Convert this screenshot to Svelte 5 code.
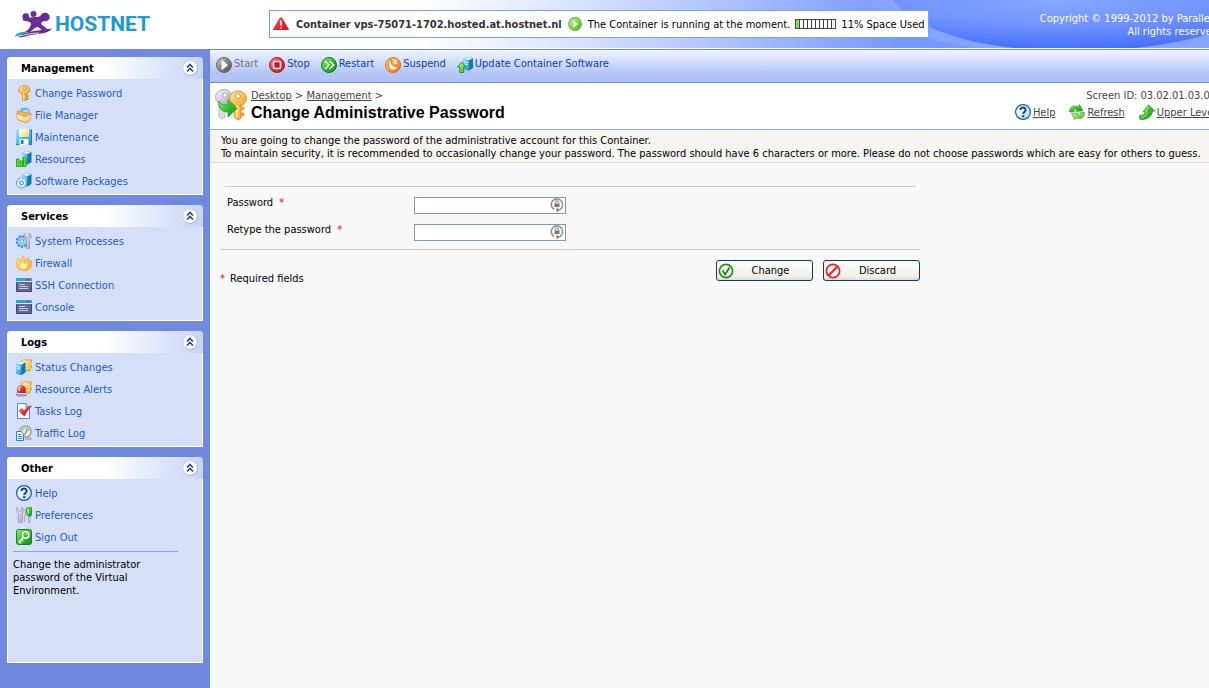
<script>
    const menu = [
        {
            title: "Management",
            items: [
                { icon: "key", text: "Change Password" },
                { icon: "files", text: "File Manager" },
                { icon: "floppy", text: "Maintenance" },
                { icon: "resources", text: "Resources" },
                { icon: "packages", text: "Software Packages" },
            ],
        },
        {
            title: "Services",
            items: [
                { icon: "processes", text: "System Processes" },
                { icon: "fire", text: "Firewall" },
                { icon: "terminal", text: "SSH Connection" },
                { icon: "terminal", text: "Console" },
            ],
        },
        {
            title: "Logs",
            items: [
                { icon: "status", text: "Status Changes" },
                { icon: "alerts", text: "Resource Alerts" },
                { icon: "tasks", text: "Tasks Log" },
                { icon: "traffic", text: "Traffic Log" },
            ],
        },
        {
            title: "Other",
            note: "Change the administrator password of the Virtual Environment.",
            items: [
                { icon: "help", text: "Help" },
                { icon: "preferences", text: "Preferences" },
                { icon: "signout", text: "Sign Out" },
            ],
        },
    ];

    const tools = [
        { icon: "start", text: "Start", disabled: true },
        { icon: "stop", text: "Stop" },
        { icon: "restart", text: "Restart" },
        { icon: "suspend", text: "Suspend" },
        { icon: "update", text: "Update Container Software" },
    ];

    const pageLinks = [
        { icon: "help", text: "Help" },
        { icon: "refresh", text: "Refresh" },
        { icon: "up", text: "Upper Level" },
    ];

    let closed = $state({});
    let password = $state("");
    let retype = $state("");

    const spaceUsed = 11;
    const cells = Array.from({ length: 10 }, (_, i) => (i + 1) * 10 <= spaceUsed);

    function discard() {
        password = "";
        retype = "";
    }
</script>

<!-- small server box shared by several icons -->
{#snippet server(x, y)}
    <g transform="translate({x} {y})">
        <path d="M0 2 3.500 0 9.500 1v10l-4 2.500L0 12z" fill="#1673bd" />
        <path d="M0 2 5.500 3.200v10.300L0 12z" fill="url(#sky)" />
        <path d="M0 2 3.500 0l6 1-4 2.200z" fill="#d4f2ff" />
        <path d="M1 5l3.500.8M1 7l3.500.8" stroke="#fff" stroke-width=".8" />
    </g>
{/snippet}

{#snippet scroll()}
    <path d="M6 2.500C6 1 7 .8 8 .8h7c1.200 0 1 2.800 0 2.800h-1v2.600h1c1.200 0 1.200 3 0 3h-1V12H6z" fill="url(#gold)" stroke="#e09a24" stroke-width=".8" />
    <path d="M8 3.600h6M8 6.200h6M8 9.200h6" stroke="#fff0a8" stroke-width=".9" />
{/snippet}

{#snippet icon(name)}
    <svg class="icon" viewBox="0 0 16 16" width="16" height="16" aria-hidden="true">
        {#if name === "key"}
            <path d="M6.500 8h3.600v7l-1.600 1-2-1z" fill="url(#gold)" stroke="#d08a2a" stroke-width=".8" />
            <path d="M10 10.200h2.200v1.500H10zM10 13h2.200v1.500H10z" fill="#e8a22e" stroke="#c2761a" stroke-width=".5" />
            <ellipse cx="8.300" cy="4.900" rx="5.600" ry="4.500" fill="url(#gold)" stroke="#d08a2a" stroke-width=".8" />
            <circle cx="8.300" cy="3.600" r="1.300" fill="#fff" stroke="#b96c12" stroke-width=".7" />
            <path d="M7.600 8v7" stroke="#fff0b0" stroke-width=".8" />
        {:else if name === "files"}
            <path d="M4.500 1l6-.5 2 6-6.500 3z" fill="#63bced" />
            <path d="M6 2.500l7-.5 1 6-7 2z" fill="#a9dcf8" stroke="#3d97d0" stroke-width=".6" />
            <path d="M1 4.500l3-1 1.300 1.300 9.700 1.700-1 7-4.500 2L2 13z" fill="#eeb657" stroke="#c98832" stroke-width=".6" />
            <path d="M0 6.500l9.500 3.500L15.500 7 14 13.500l-4.500 2L2 12.500z" fill="url(#cream)" stroke="#d29a42" stroke-width=".6" />
        {:else if name === "floppy"}
            <path d="M0 0h15l1 1v15H1.500L0 14.500z" fill="url(#sky)" />
            <path d="M0 15.500h15.500V.5" fill="none" stroke="#1a7dc4" />
            <path d="M3 0h10v8H3z" fill="url(#paleGold)" />
            <path d="M3.500 10h9v6h-9z" fill="#e9f6fd" />
            <path d="M5 11h2.500v4H5z" fill="#1b7fc4" />
        {:else if name === "resources"}
            {@render server(6, 0)}
            <path d="M.5 8h2.500v7.500H.5zM4 10h2.500v5.500H4zM7.500 6H10v9.500H7.500z" fill="#5fe03a" stroke="#1da50f" stroke-width=".9" />
        {:else if name === "packages"}
            {@render server(6, 0)}
            <circle cx="5.500" cy="10" r="5" fill="#d3edfb" stroke="#5a9dcc" />
            <path d="M5.500 5v3M1 11l3-.6M9 7l-2 1.500" stroke="#fff" stroke-width="1.200" />
            <circle cx="5.500" cy="10" r="1.800" fill="#fff" stroke="#287eb8" />
        {:else if name === "processes"}
            <circle cx="6" cy="8.500" r="5" fill="#a7d8f6" stroke="#2f8fd2" stroke-width="2.600" stroke-dasharray="2.200 1.100" />
            <circle cx="6" cy="8.500" r="4.500" fill="#9fd4f5" stroke="#459cd6" stroke-width=".8" />
            <circle cx="6" cy="8.500" r="1.700" fill="#fff" stroke="#2b80bd" stroke-width=".7" />
            <path d="M9 .5v3l2 1.200 2-1.200v-3c3 1 2.500 5 .5 6V15c0 1.500-3 1.500-3 0V6.500C8 5 7.500 2 9 .5z" fill="url(#silver)" stroke="#8987a8" stroke-width=".7" />
        {:else if name === "fire"}
            <path d="M1.500 3c1.300.6 2 1.500 2.300 2.500C6 5 5 2.500 7.500.5c-.5 2.500 2 3 2.500 4.500 1-.5 1-1.500 2.500-2.500-.5 2 .7 3 1.200 4 .6-.4 1-1 1.500-1.500C17 10.500 14.500 15.700 8.500 15.700S-.3 12 .3 8C.8 6 2 5.500 1.500 3z" fill="url(#flame)" stroke="#f2a12d" stroke-width=".6" />
            <path d="M4 10c1.500-.5 1.500-2 3-3.500 0 1.500 1.500 2 2 3 1-.3 1.300-1 2-1.500 1 4-1 6-3.500 6S4 12.500 4 10z" fill="#fff1a6" />
        {:else if name === "terminal"}
            <path d="M0 1h16v14H0z" fill="#45476c" />
            <path d="M1 5h14v9H1z" fill="#66688f" />
            <path d="M0 1h16v4H0z" fill="#27a4e4" />
            <path d="M0 4.500h16" stroke="#cdf0ff" />
            <path d="M10 2h4v1.500h-4z" fill="#f22b32" />
            <path d="M3 7.500h6M3 9.500h9M3 11.500h9" stroke="#c6c9df" />
        {:else if name === "status"}
            {@render scroll()}
            {@render server(0, 2.500)}
        {:else if name === "alerts"}
            {@render scroll()}
            <path d="M1.500 12V8c0-4.500 8-4.500 8 0v4z" fill="url(#red)" stroke="#c9252b" stroke-width=".6" />
            <path d="M3.200 10V7.500c0-1 .7-1.500 1.500-1.700" fill="none" stroke="#ffe5df" stroke-width="1.300" />
            <path d="M0 12h11v2.500l-2 1H2l-2-1z" fill="#9a9cba" />
            <path d="M1 12.500h9" stroke="#f3f3ff" />
        {:else if name === "tasks"}
            <path d="M1.500.5H10L13.500 4v11.500h-12z" fill="#f6fbff" stroke="#4b91c8" />
            <path d="M10 .5V4h3.500" fill="#c6e4f5" stroke="#4b91c8" />
            <path d="M3 7.500l3-2 2 2.500C10 5 12 3.500 15.500 3c-3 3-5 6-7 10C7 12 5 10 3 7.500z" fill="url(#red)" stroke="#c2202a" stroke-width=".6" />
        {:else if name === "traffic"}
            <circle cx="9.500" cy="6.500" r="5.600" fill="#e3f3e3" stroke="#9c9bb8" stroke-width="1.500" />
            <path d="M6 7c0-5 7-5 7-.5" fill="none" stroke="#a5cf94" stroke-width="1.500" />
            <path d="M8.500 10l3-6" stroke="#5f6080" />
            <path d="M9 12h6l1 3H9z" fill="#b3b2ca" />
            <path d="M.5 6.500H5L7.500 9v6.500h-7z" fill="#eefaff" stroke="#2c84c6" />
            <path d="M2 9.500h3M2 11.500h4M2 13.500h4" stroke="#2c84c6" />
        {:else if name === "help"}
            <circle cx="8" cy="8" r="7.400" fill="url(#ice)" stroke="#125e9f" stroke-width="1.200" />
            <path d="M5.300 6c.1-3.400 5.600-3.100 5.300.1C10.500 8 8.200 7.900 8.200 10" fill="none" stroke="#17458f" stroke-width="2" />
            <path d="M7.100 11.200h2.200v2H7.100z" fill="#17458f" />
        {:else if name === "preferences"}
            <path d="M1.500.5v3l2 1 2-1v-3c3 1 3 4.500.8 6V14c0 2.500-4 2.500-4 0V6.500C-.5 5-.5 2 1.500.5z" fill="url(#silver)" stroke="#8987a8" stroke-width=".7" />
            <path d="M8 2c1 .5 1.500 1 1.500 3L8.300 15" fill="none" stroke="#a09eb8" />
            <path d="M10.500 1l4-.7L16 1v6l-1.500 2.500h-2L10.500 7z" fill="url(#green)" stroke="#1b961a" stroke-width=".7" />
            <path d="M12 2v5" stroke="#c9ffac" />
            <path d="M12.500 9.500h1.700v3l-.3 3h-1.200l-.2-3z" fill="#e7e7f1" stroke="#777596" stroke-width=".6" />
        {:else if name === "signout"}
            <rect x=".5" y=".5" width="15" height="15" rx="2" fill="url(#green)" stroke="#128416" />
            <circle cx="9.700" cy="6" r="3.200" fill="none" stroke="#fff" stroke-width="1.500" />
            <circle cx="10.500" cy="5.200" r=".8" fill="#fff" />
            <path d="M7.500 8.200 3.500 12.200v1.300h2M5.500 10.500 7 12" fill="none" stroke="#fff" stroke-width="1.500" />
        {:else if name === "start"}
            <circle cx="8" cy="8" r="7.500" fill="url(#gray)" stroke="#666" />
            <path d="M6 3.500v9L11.500 8z" fill="#fff" stroke="#fff" stroke-linejoin="round" />
        {:else if name === "stop"}
            <circle cx="8" cy="8" r="7.500" fill="url(#red)" stroke="#b5101e" />
            <rect x="4.500" y="4.500" width="7" height="7" rx="1" fill="#d4122a" stroke="#fff" stroke-width="1.600" />
        {:else if name === "restart"}
            <circle cx="8" cy="8" r="7.500" fill="url(#green)" stroke="#0e7a1d" />
            <path d="M4 4l4 4-4 4M8.500 4l4 4-4 4" fill="none" stroke="#fff" stroke-width="1.500" />
        {:else if name === "suspend"}
            <circle cx="8" cy="8" r="7.500" fill="url(#orange)" stroke="#de6a1a" />
            <path d="M6.500 2.500C1.500 4 2.500 13 8 13.300c3.300 0 5-2.300 5.200-5-2.200 2.700-8 1.200-6.700-5.800z" fill="#fff7d9" stroke="#d9640f" stroke-width=".9" />
            <path d="M9 3.500h2.500L9.300 6.500h2.500" fill="none" stroke="#fff" />
        {:else if name === "update"}
            {@render server(6.500, 0)}
            <path d="M4.700 5 9 10H6.700v5.500H2.800V10H.5z" fill="url(#lime)" stroke="#2f971a" />
        {:else if name === "refresh"}
            <path d="M.5 8C0 3 5 .5 9 2.700L10.500.5 14 7 6.500 7.500 8 5.500C6 4.500 5 6 4.800 8z" fill="url(#green)" stroke="#1e9220" stroke-width=".5" />
            <path d="M15.500 8.500c.3 5-4.500 7.500-8.500 5.300l-1.200 1.900L2.500 9.500l7-.5L8 11.200c2 .8 3.200-.7 3.500-2.700z" fill="url(#lime)" stroke="#1e9220" stroke-width=".5" />
        {:else if name === "up"}
            <path d="M9.500.7 15.800 7l-2.500.5c0 5-5.500 8.500-12.300 8L.3 11.500c3.700.2 5.700-1 6-3.500L4 8z" fill="url(#green)" stroke="#168a1c" stroke-width=".6" />
            <path d="M9.500 2.500 6.500 7l1.700.4C8 11 6 13 2 13.300" fill="none" stroke="#aaf584" stroke-width=".9" />
        {:else if name === "warning"}
            <path d="M7.300 2h1.400L15.500 13.500H.5z" fill="url(#red)" stroke="#d31a1d" stroke-linejoin="round" />
            <path d="M8 4.500v5M8 11v1.500" stroke="#fff" stroke-width="1.600" />
        {:else if name === "running"}
            <circle cx="8" cy="8" r="6.300" fill="url(#lime)" stroke="#6ab838" stroke-width="1.200" />
            <path d="M6.200 4.500v7L11 8z" fill="#fff" />
        {:else if name === "ok"}
            <circle cx="8" cy="8" r="6.600" fill="#fff" stroke="#209013" stroke-width="1.700" />
            <path d="M4.500 7.500 7.200 11.500 11.500 4.500" fill="none" stroke="#209013" stroke-width="2" />
        {:else if name === "cancel"}
            <circle cx="8" cy="8" r="6.600" fill="#fff" stroke="#f51f25" stroke-width="1.700" />
            <path d="M3.500 12.500 12.500 3.500" stroke="#f51f25" stroke-width="2.200" />
        {:else if name === "lock"}
            <path d="M5 12.500A5.700 5.700 0 1 1 10.500 12.700" fill="none" stroke="#919191" stroke-width="1.600" />
            <path d="M7.500 10.500v5L11 13z" fill="#808080" />
            <rect x="5.500" y="6.500" width="5" height="3.500" fill="#777" />
            <path d="M6.500 6.500V5.300c0-1.800 3-1.800 3 0v1.200" fill="none" stroke="#777" />
        {/if}
    </svg>
{/snippet}

{#snippet gradient(id, from, mid, to)}
    <linearGradient {id} x1="0" y1="0" x2="1" y2="1">
        <stop offset="0" stop-color={from} />
        <stop offset=".5" stop-color={mid} />
        <stop offset="1" stop-color={to} />
    </linearGradient>
{/snippet}

<svg class="defs" width="0" height="0" aria-hidden="true">
    <defs>
        {@render gradient("gold", "#fff3b8", "#fbc657", "#eba238")}
        {@render gradient("paleGold", "#fffdea", "#fcecab", "#f2cf62")}
        {@render gradient("cream", "#fff8df", "#fde2a6", "#f3bc62")}
        {@render gradient("sky", "#a5e4ff", "#4fbcf0", "#1f8ad2")}
        {@render gradient("silver", "#fcfcff", "#cdccdf", "#a3a1bb")}
        {@render gradient("flame", "#ffe08a", "#ffc555", "#ffa536")}
        {@render gradient("red", "#ff9c92", "#ee2c30", "#c21420")}
        {@render gradient("green", "#9aef75", "#36bf2b", "#138d1a")}
        {@render gradient("lime", "#d3f7a8", "#86d852", "#40b026")}
        {@render gradient("gray", "#d5d5d5", "#858585", "#4c4c4c")}
        {@render gradient("orange", "#ffe9a0", "#fba648", "#e56a1a")}
        {@render gradient("ice", "#fff", "#e1f3ff", "#a3d4f5")}
    </defs>
</svg>

<div class="page">
    <header class="header">
        <svg class="swirl" viewBox="0 0 354 48" width="354" height="48" aria-hidden="true">
            <defs>
                <radialGradient id="disc" cx=".5" cy="0" r=".95">
                    <stop offset="0" stop-color="#86a8ff" />
                    <stop offset=".5" stop-color="#7394ff" />
                    <stop offset="1" stop-color="#4470ff" />
                </radialGradient>
            </defs>
            <path d="M0 0C28 30 62 42 112 48H354V0z" fill="#86a4ff" />
            <path d="M26 0C72 62 265 62 354 30V0z" fill="url(#disc)" />
        </svg>
        <a class="logo" href="#home" aria-label="Hostnet">
            <svg viewBox="0 0 38 27" width="38" height="27" aria-hidden="true">
                <path d="M0 25.500c1-4 7-4.500 12-5l-2 5z" fill="#24a0d8" />
                <path d="M3 26c7-5 15-6 20-6.500l14-2C32 24 22 22 12 25c-3 1-6 1.500-9 1z" fill="#6b2c91" />
                <path d="M1 25.500c9-1.500 15-3.500 23-3.500" fill="none" stroke="#fff" stroke-width=".8" />
                <circle cx="18.500" cy="3" r="3" fill="#6b2c91" />
                <ellipse cx="30" cy="6" rx="4.800" ry="4.300" fill="#6b2c91" />
                <circle cx="10.800" cy="5.500" r="3.300" fill="#6b2c91" />
                <path d="M8 5.500c5 2 9 .5 14 .5 2 0 4-1.500 6-2l3 5.500c-3 .5-4.500 1.500-5 3 1 2.500 5 3.500 7 6.500l-4 1.500-6-4.500c-4 0-5 4-9 5.500l-4-1c3-1 5-4 6-7 0-2-1-3-8-4z" fill="#6b2c91" />
            </svg>
            <span>HOSTNET</span>
        </a>
        <div class="status">
            {@render icon("warning")}
            <strong>Container vps-75071-1702.hosted.at.hostnet.nl</strong>
            {@render icon("running")}
            <span>The Container is running at the moment.</span>
            <span class="meter" role="img" aria-label="Disk space">
                {#each cells as full}<i class:full></i>{/each}
            </span>
            <span>{spaceUsed}% Space Used</span>
        </div>
        <div class="copyright">
            Copyright © 1999-2012 by Parallels.<br />
            All rights reserved.
        </div>
    </header>

    <div class="body">
        <aside class="sidebar">
            {#each menu as group}
                <section class="panel" class:tall={group.note}>
                    <div class="panel-head">
                        <h2>{group.title}</h2>
                        <button
                            type="button"
                            class="toggle"
                            aria-label="Toggle {group.title}"
                            onclick={() => (closed[group.title] = !closed[group.title])}
                        >
                            <svg viewBox="0 0 16 16" width="16" height="16" aria-hidden="true">
                                <circle cx="8.500" cy="8.500" r="7.500" fill="#a9b2d8" />
                                <circle cx="8" cy="8" r="7.200" fill="#fff" stroke="#c3c9e4" stroke-width=".7" />
                                <path d="M5 7.500 8 4.500l3 3M5 11.500l3-3 3 3" fill="none" stroke="#17449b" stroke-width="1.600" />
                            </svg>
                        </button>
                    </div>
                    {#if !closed[group.title]}
                        <nav class="panel-body">
                            {#each group.items as item}
                                <a href="#{item.icon}">{@render icon(item.icon)}{item.text}</a>
                            {/each}
                            {#if group.note}
                                <p class="note">{group.note}</p>
                            {/if}
                        </nav>
                    {/if}
                </section>
            {/each}
        </aside>

        <main class="main">
            <div class="toolbar">
                {#each tools as tool}
                    <button type="button" disabled={tool.disabled}>{@render icon(tool.icon)}{tool.text}</button>
                {/each}
            </div>

            <div class="title-bar">
                <svg viewBox="0 0 32 32" width="32" height="32" aria-hidden="true">
                    <path d="M4 14h6v14l-3 2-3-2z" fill="#dcdce0" stroke="#bbb" />
                    <ellipse cx="9" cy="8" rx="8.500" ry="7.500" fill="url(#silver)" stroke="#b4b4b4" />
                    <circle cx="10" cy="6" r="2.200" fill="#fff" stroke="#aaa" />
                    <path d="M20 14h6v15l-3 2-4-3z" fill="url(#gold)" stroke="#d9922c" />
                    <path d="M26 18h3v3h-3zM26 24h3v3h-3z" fill="#f3b43d" stroke="#d9922c" stroke-width=".7" />
                    <ellipse cx="23" cy="9.500" rx="8.500" ry="7.500" fill="url(#gold)" stroke="#d9922c" />
                    <circle cx="23" cy="7" r="2.500" fill="#fff" stroke="#d9922c" />
                    <path d="M22 16v13" stroke="#fff0a0" stroke-width="1.200" />
                    <path d="M4 12c1 4 5 4 9 4v-5.500L22 19.500 13 28v-5C7 23 3 19 4 12z" fill="url(#green)" stroke="#1e9a22" stroke-width=".8" />
                </svg>
                <div class="heading">
                    <nav class="crumbs"><a href="#desktop">Desktop</a> &gt; <a href="#management">Management</a> &gt;</nav>
                    <h1>Change Administrative Password</h1>
                </div>
                <div class="screen">
                    <div>Screen ID: 03.02.01.03.01</div>
                    <nav class="page-links">
                        {#each pageLinks as link}
                            <a href="#{link.icon}">{@render icon(link.icon)}<span>{link.text}</span></a>
                        {/each}
                    </nav>
                </div>
            </div>

            <p class="description">
                You are going to change the password of the administrative account for this Container.<br />
                To maintain security, it is recommended to occasionally change your password. The password should have 6 characters or more. Please do not choose passwords which are easy for others to guess.
            </p>

            <form class="form" onsubmit={(e) => e.preventDefault()}>
                <div class="fields">
                    <div class="row">
                        <label for="password">Password <em>*</em></label>
                        <div class="field">
                            <input id="password" type="password" bind:value={password} />
                            {@render icon("lock")}
                        </div>
                    </div>
                    <div class="row">
                        <label for="retype">Retype the password <em>*</em></label>
                        <div class="field">
                            <input id="retype" type="password" bind:value={retype} />
                            {@render icon("lock")}
                        </div>
                    </div>
                </div>
                <div class="actions">
                    <span class="required"><em>*</em> Required fields</span>
                    <button type="submit">{@render icon("ok")}<span>Change</span></button>
                    <button type="button" onclick={discard}>{@render icon("cancel")}<span>Discard</span></button>
                </div>
            </form>
        </main>
    </div>
</div>

<style>
    :global(body) {
        background: #f8f8f8;
        overflow-x: hidden;
    }

    .page {
        min-width: 1221px;
        min-height: 100vh;
        display: flex;
        flex-direction: column;
        font-family: Tahoma, "DejaVu Sans Condensed", "DejaVu Sans", sans-serif;
        font-size: 11px;
        line-height: 13px;
        color: #000;
    }

    h1, h2, p {
        margin: 0;
    }

    button {
        font: inherit;
        cursor: pointer;
    }

    .defs {
        position: absolute;
    }

    .icon {
        flex: none;
        display: block;
    }

    .header {
        position: relative;
        display: flex;
        align-items: flex-start;
        height: 48px;
        border-bottom: 1px solid #fff;
        background: linear-gradient(to right, #fff 420px, #dbe4ff 570px, #a9bdff 740px, #7698ff 900px);
    }

    .swirl {
        position: absolute;
        right: 0;
        top: 0;
    }

    .logo {
        display: flex;
        align-items: center;
        gap: 2px;
        width: 254px;
        padding: 11px 0 0 15px;
        color: #1b9bd3;
        font: 700 21px/27px Roboto, sans-serif;
        text-decoration: none;
    }

    .status {
        position: relative;
        display: flex;
        align-items: center;
        gap: 5px;
        height: 26px;
        margin-top: 10px;
        padding: 0 3px;
        border: 1px solid #7b9ff9;
        background: #fff;
        white-space: nowrap;
    }

    .status strong {
        padding-left: 2px;
        color: #333;
    }

    .meter {
        display: flex;
        gap: 1px;
        border: 1px solid #444;
        background: #444;
    }

    .meter i {
        width: 3px;
        height: 8px;
        background: #fff;
    }

    .meter .full {
        background: #8fdc6b;
    }

    .copyright {
        position: relative;
        margin-left: auto;
        padding-top: 12px;
        color: #fff;
        text-align: right;
        white-space: nowrap;
    }

    .body {
        flex: 1;
        display: flex;
    }

    .sidebar {
        flex: none;
        display: flex;
        flex-direction: column;
        gap: 10px;
        width: 196px;
        padding: 8px 7px;
        background: #7089de;
    }

    .panel {
        border-radius: 4px 4px 0 0;
        overflow: hidden;
        background: #d6dff8;
    }

    .panel-head {
        display: flex;
        align-items: center;
        justify-content: space-between;
        height: 22px;
        padding: 0 5px 0 14px;
        background: linear-gradient(to right, #fff 50%, #c6d3f7);
    }

    .panel-head h2 {
        font-size: 11px;
    }

    .toggle {
        width: 16px;
        height: 16px;
        padding: 0;
        border: 0;
        background: none;
    }

    .toggle svg {
        display: block;
    }

    .panel-body {
        padding: 3px 8px 2px;
        border: 1px solid #fff;
        border-top: 0;
    }

    .tall .panel-body {
        min-height: 178px;
    }

    .panel-body a {
        display: flex;
        align-items: center;
        gap: 3px;
        height: 22px;
        color: #215dc6;
        text-decoration: none;
    }

    .note {
        width: 140px;
        margin: 3px 16px 0 -3px;
        padding: 6px 25px 0 0;
        border-top: 1px solid #8aa5ea;
    }

    .main {
        flex: 1;
        min-width: 0;
        background: #f8f8f8;
    }

    .toolbar {
        display: flex;
        align-items: flex-start;
        gap: 11px;
        height: 25px;
        padding: 7px 6px 0;
        border-top: 1px solid #6f88df;
        border-bottom: 1px solid #7089df;
        background: linear-gradient(#f0f4fe, #b2c5f5 75%, #afc2f4);
    }

    .toolbar button {
        display: flex;
        align-items: flex-start;
        gap: 2px;
        padding: 0;
        border: 0;
        background: none;
        color: #0c3fae;
        white-space: nowrap;
    }

    .toolbar button:disabled {
        color: #777;
        cursor: default;
    }

    .title-bar {
        display: flex;
        gap: 4px;
        height: 40px;
        padding: 6px 5px 0 5px;
        border-bottom: 1px solid #91a7bb;
        background: #fff;
        color: #444;
    }

    .title-bar > svg {
        flex: none;
    }

    .title-bar a {
        color: #444;
    }

    .heading h1 {
        color: #000;
        font: 700 16px/21px "Liberation Sans", Arial, sans-serif;
    }

    .screen {
        margin-left: auto;
        text-align: right;
        white-space: nowrap;
    }

    .page-links {
        display: flex;
        justify-content: flex-end;
        gap: 14px;
        padding-top: 2px;
    }

    .page-links a {
        display: flex;
        align-items: center;
        gap: 2px;
    }

    .description {
        padding: 4px 11px 2px;
        border-bottom: 1px solid #dedac9;
        background: #f5f4ef;
        white-space: nowrap;
    }

    .form {
        max-width: 700px;
        padding: 23px 10px 0;
    }

    .fields {
        border-bottom: 1px solid #ccc;
        padding-bottom: 3px;
    }

    .fields::before {
        content: "";
        display: block;
        margin: 0 5px 5px;
        border-top: 1px solid #ccc;
    }

    .row {
        display: flex;
        height: 27px;
        padding-left: 7px;
    }

    .row label {
        width: 187px;
        padding-top: 4px;
    }

    em {
        color: #f00;
        font-style: normal;
    }

    label em {
        margin-left: 3px;
    }

    .field {
        position: relative;
        margin-top: 5px;
    }

    .field input {
        box-sizing: border-box;
        display: block;
        width: 152px;
        height: 17px;
        padding: 0 18px 0 2px;
        border: 1px solid #7f9db9;
        background: #fff;
        font: inherit;
    }

    .field :global(.icon) {
        position: absolute;
        right: 1px;
        top: 0;
    }

    .actions {
        display: flex;
        align-items: flex-start;
        gap: 10px;
        padding-top: 10px;
    }

    .required {
        margin-right: auto;
        padding-top: 12px;
    }

    .required em {
        margin-right: 2px;
    }

    .actions button {
        display: flex;
        align-items: center;
        width: 97px;
        height: 21px;
        padding: 0 1px;
        border: 1px solid #0b3b70;
        border-radius: 3px;
        background: linear-gradient(#fff, #f1f0ea 80%, #dfdcd0);
    }

    .actions button span {
        flex: 1;
        padding-right: 4px;
        text-align: center;
    }
</style>
